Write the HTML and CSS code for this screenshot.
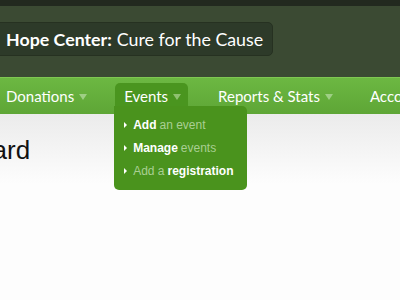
FILE: index.html
```html
<!DOCTYPE html>
<html>
<head>
<meta charset="utf-8">
<link rel="stylesheet" href="styles.css">
</head>
<body>
<div class="topbar"></div>
<header class="header">
  <div class="title"><strong>Hope Center:</strong> Cure for the Cause</div>
</header>
<nav class="nav">
  <ul class="nav-list">
    <li class="nav-item">Donations<span class="caret"></span></li>
    <li class="nav-item active">Events<span class="caret"></span>
      <ul class="dropdown">
        <li class="dd-item"><span class="dd-arrow"></span><b>Add</b> an event</li>
        <li class="dd-item"><span class="dd-arrow"></span><b>Manage</b> events</li>
        <li class="dd-item"><span class="dd-arrow"></span>Add a <b>registration</b></li>
      </ul>
    </li>
    <li class="nav-item">Reports &amp; Stats<span class="caret"></span></li>
    <li class="nav-item">Accounts<span class="caret"></span></li>
  </ul>
</nav>
<main class="content">
  <h1 class="page-title">Dashboard</h1>
</main>
</body>
</html>
```
FILE: styles.css
```css
* { box-sizing: border-box; }
html, body { margin: 0; padding: 0; }
body {
  width: 400px;
  height: 300px;
  overflow: hidden;
  background: #fdfdfd;
  font-family: "Lato", "Open Sans", sans-serif;
}
.topbar {
  height: 6px;
  background: #22291f;
}
.header {
  height: 71px;
  background: #3b4a33;
  padding-top: 16px;
}
.title {
  display: inline-flex;
  align-items: center;
  gap: 5px;
  height: 34px;
  margin-left: -10px;
  padding: 0 9px 0 15px;
  background: #2d3a29;
  border: 1px solid #263121;
  border-radius: 5px;
  color: #ffffff;
  font-size: 17.8px;
  white-space: nowrap;
}
.title strong { font-weight: 700; }
.nav {
  height: 37px;
  background: linear-gradient(#6cb842, #5ea636);
  border-top: 1px solid #7fc752;
}
.nav-list {
  list-style: none;
  margin: 0 0 0 -3px;
  padding: 5px 0 0;
  display: flex;
  gap: 21px;
  white-space: nowrap;
}
.nav-item {
  position: relative;
  height: 31px;
  padding: 0 7px 5px 9px;
  display: flex;
  align-items: center;
  color: #ffffff;
  font-size: 15px;
  border-radius: 5px 5px 0 0;
}
.nav-item.active { background: #4a951f; }
.caret {
  display: inline-block;
  width: 0;
  height: 0;
  margin-left: 5px;
  margin-top: 2px;
  border-left: 4px solid transparent;
  border-right: 4px solid transparent;
  border-top: 6px solid #9fcf85;
}
.active .caret { border-top-color: #90c070; }
.dropdown {
  position: absolute;
  left: -1px;
  top: 23px;
  width: 133px;
  height: 84px;
  list-style: none;
  margin: 0;
  padding: 7px 0 0 10px;
  background: #4a931d;
  border-radius: 0 5px 5px 5px;
  font-family: "Liberation Sans", Arial, sans-serif;
  font-size: 12px;
  color: #a9cf93;
}
.dd-item {
  height: 23px;
  display: flex;
  align-items: center;
  gap: 3px;
}
.dd-item b { color: #ffffff; font-weight: 700; }
.dd-arrow {
  display: inline-block;
  width: 0;
  height: 0;
  margin-right: 3px;
  border-top: 3px solid transparent;
  border-bottom: 3px solid transparent;
  border-left: 3px solid #ffffff;
}
.content {
  height: 186px;
  background: linear-gradient(#ebebeb, #fdfdfd 70px);
  padding-top: 21px;
}
.page-title {
  margin: 0 0 0 -97px;
  font-family: "Liberation Sans", Arial, sans-serif;
  font-weight: 400;
  font-size: 26px;
  color: #111;
}
```
